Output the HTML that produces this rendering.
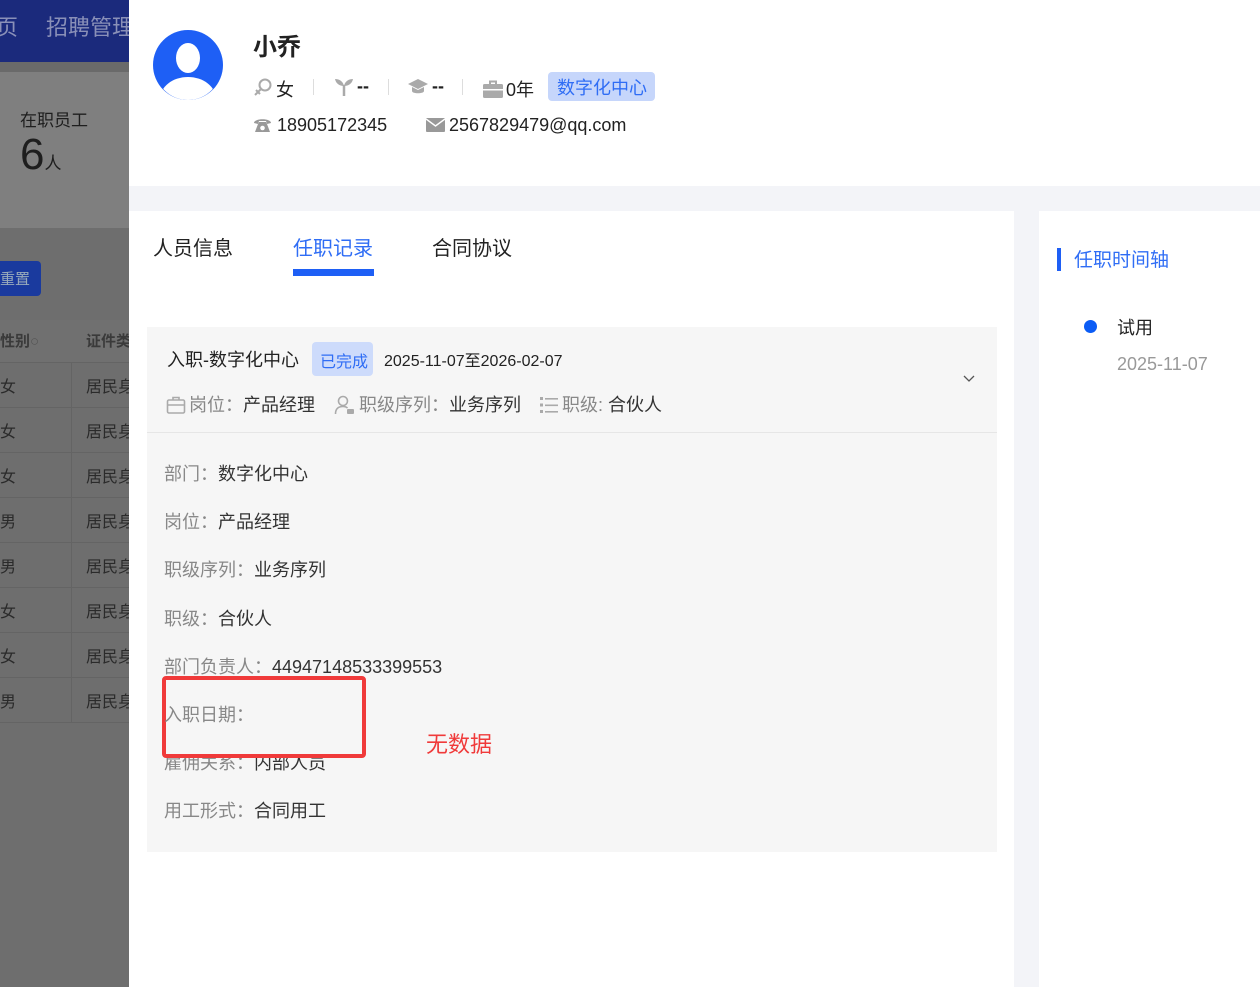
<!DOCTYPE html>
<html><head><meta charset="utf-8"><style>
*{margin:0;padding:0;box-sizing:border-box}
body{width:1260px;height:987px;position:relative;overflow:hidden;font-family:"Liberation Sans","Noto Sans CJK SC",sans-serif;background:#f3f4f8;color:#333}
.a{position:absolute;white-space:nowrap}
.bg{position:absolute;left:0;top:0;width:129px;height:987px;background:#6e6e6e;overflow:hidden}
.row{position:absolute;left:0;width:129px;height:45px;border-bottom:1px solid #646464;font-size:16px;color:#2a2a2a}
.lbl{color:#888}
.sep{position:absolute;top:79px;width:1px;height:16px;background:#ddd}
</style></head><body>
<div class="bg">
 <div class="a" style="left:0;top:0;width:129px;height:62px;background:#1b2a7c"></div>
 <div class="a" style="left:-4px;top:10px;font-size:22px;color:#8a90b8">页</div>
 <div class="a" style="left:46px;top:10px;font-size:22px;color:#8a90b8">招聘管理</div>
 <div class="a" style="left:0;top:62px;width:129px;height:10px;background:#6a6a6a"></div>
 <div class="a" style="left:0;top:72px;width:129px;height:156px;background:#7f7f7f"></div>
 <div class="a" style="left:20px;top:106px;font-size:17px;color:#1e1e1e">在职员工</div>
 <div class="a" style="left:20px;top:130px;font-size:44px;color:#1e1e1e">6<span style="font-size:17px">人</span></div>
 <div class="a" style="left:-6px;top:261px;width:47px;height:35px;background:#1a3a9e;border-radius:4px;color:#9ab;font-size:15px;padding:7px 0 0 6px">重置</div>
 <div class="a" style="left:0;top:320px;width:129px;height:43px;background:#707070;border-bottom:1px solid #646464"></div>
 <div class="a" style="left:0;top:330px;font-size:15px;color:#3a3a3a;font-weight:bold">性别<span style="font-weight:normal;color:#555">○</span></div>
 <div class="a" style="left:86px;top:330px;font-size:15px;color:#3a3a3a;font-weight:bold">证件类</div>
 <div class="a" style="left:71px;top:363px;width:1px;height:360px;background:#646464"></div>
 <div class="row" style="top:363px"><span class="a" style="left:0;top:10px">女</span><span class="a" style="left:86px;top:10px">居民身</span></div>
 <div class="row" style="top:408px"><span class="a" style="left:0;top:10px">女</span><span class="a" style="left:86px;top:10px">居民身</span></div>
 <div class="row" style="top:453px"><span class="a" style="left:0;top:10px">女</span><span class="a" style="left:86px;top:10px">居民身</span></div>
 <div class="row" style="top:498px"><span class="a" style="left:0;top:10px">男</span><span class="a" style="left:86px;top:10px">居民身</span></div>
 <div class="row" style="top:543px"><span class="a" style="left:0;top:10px">男</span><span class="a" style="left:86px;top:10px">居民身</span></div>
 <div class="row" style="top:588px"><span class="a" style="left:0;top:10px">女</span><span class="a" style="left:86px;top:10px">居民身</span></div>
 <div class="row" style="top:633px"><span class="a" style="left:0;top:10px">女</span><span class="a" style="left:86px;top:10px">居民身</span></div>
 <div class="row" style="top:678px"><span class="a" style="left:0;top:10px">男</span><span class="a" style="left:86px;top:10px">居民身</span></div>
</div>

<div class="a" style="left:129px;top:0;width:1131px;height:186px;background:#fff"></div>
<svg class="a" style="left:152px;top:29px" width="72" height="72" viewBox="0 0 72 72"><defs><clipPath id="c"><ellipse cx="36" cy="36" rx="34" ry="35"/></clipPath></defs><ellipse cx="36" cy="36" rx="35" ry="35" fill="#1e5ff5"/><g clip-path="url(#c)"><ellipse cx="36" cy="29" rx="12" ry="15" fill="#fff"/><ellipse cx="36" cy="70" rx="28" ry="22" fill="#fff"/></g></svg>
<div class="a" style="left:253px;top:27px;font-size:24px;font-weight:bold;color:#222">小乔</div>

<svg class="a" style="left:253px;top:78px" width="20" height="20" viewBox="0 0 20 20"><circle cx="12" cy="7" r="5.5" fill="none" stroke="#aaa" stroke-width="2"/><path d="M8 11 L2 17 M3 12 L7 16" stroke="#aaa" stroke-width="2"/></svg>
<div class="a" style="left:276px;top:76px;font-size:18px;color:#222">女</div>
<div class="sep" style="left:313px"></div>
<svg class="a" style="left:334px;top:77px" width="20" height="20" viewBox="0 0 20 20"><path d="M10 8 L10 19" stroke="#aaa" stroke-width="2.5"/><path d="M10 9 C6 9 2 7 1 2 C5 2 9 4 10 9Z M10 9 C14 9 18 7 19 2 C15 2 11 4 10 9Z" fill="#aaa"/></svg>
<div class="a" style="left:357px;top:76px;font-size:18px;color:#222;font-weight:bold">--</div>
<div class="sep" style="left:388px"></div>
<svg class="a" style="left:407px;top:78px" width="22" height="18" viewBox="0 0 22 18"><path d="M11 1 L21 6 L11 11 L1 6Z" fill="#aaa"/><path d="M5 9 L5 13 C5 16 17 16 17 13 L17 9 L11 12Z" fill="#aaa"/></svg>
<div class="a" style="left:432px;top:76px;font-size:18px;color:#222;font-weight:bold">--</div>
<div class="sep" style="left:462px"></div>
<svg class="a" style="left:483px;top:80px" width="20" height="18" viewBox="0 0 20 18"><path d="M7 4 V1.5 H13 V4" fill="none" stroke="#aaa" stroke-width="2"/><rect x="0" y="4" width="20" height="14" rx="1.5" fill="#aaa"/><rect x="0" y="9" width="20" height="1.5" fill="#fff"/></svg>
<div class="a" style="left:506px;top:76px;font-size:18px;color:#222">0年</div>
<div class="a" style="left:548px;top:72px;width:107px;height:29px;background:#c6d6fb;border-radius:4px;color:#2f6df5;font-size:18px;padding:2px 0 0 9px">数字化中心</div>

<svg class="a" style="left:253px;top:117px" width="19" height="17" viewBox="0 0 19 17"><path d="M1 6 C1 1 18 1 18 6 L14 7 L13 4 L6 4 L5 7Z" fill="#999"/><path d="M5 7 L6 5 L13 5 L14 7 L17 15 L2 15Z" fill="#999"/><circle cx="9.5" cy="11" r="2.3" fill="#fff"/></svg>
<div class="a" style="left:277px;top:115px;font-size:18px;color:#222">18905172345</div>
<svg class="a" style="left:426px;top:118px" width="19" height="14" viewBox="0 0 19 14"><rect width="19" height="14" rx="1" fill="#999"/><path d="M0 1 L9.5 8 L19 1" fill="none" stroke="#fff" stroke-width="1.5"/></svg>
<div class="a" style="left:449px;top:115px;font-size:18px;color:#222">2567829479@qq.com</div>

<div class="a" style="left:129px;top:211px;width:885px;height:776px;background:#fff"></div>
<div class="a" style="left:1039px;top:211px;width:221px;height:776px;background:#fff"></div>
<div class="a" style="left:153px;top:232px;font-size:20px;color:#222">人员信息</div>
<div class="a" style="left:293px;top:232px;font-size:20px;color:#2f6df5">任职记录</div>
<div class="a" style="left:293px;top:269px;width:81px;height:7px;background:#1e5ff5"></div>
<div class="a" style="left:432px;top:232px;font-size:20px;color:#222">合同协议</div>

<div class="a" style="left:147px;top:327px;width:850px;height:525px;background:#f6f6f6"></div>
<div class="a" style="left:147px;top:432px;width:850px;height:1px;background:#e6e6e6"></div>
<div class="a" style="left:167px;top:346px;font-size:18px;color:#222">入职-数字化中心</div>
<div class="a" style="left:312px;top:342px;width:61px;height:34px;background:#cddbfb;border-radius:4px;color:#2f6df5;font-size:16px;padding:6px 0 0 8px">已完成</div>
<div class="a" style="left:384px;top:347px;font-size:16px;color:#222">2025-11-07至2026-02-07</div>
<svg class="a" style="left:963px;top:375px" width="12" height="8" viewBox="0 0 12 8"><path d="M1 1 L6 6 L11 1" fill="none" stroke="#555" stroke-width="1.3"/></svg>

<svg class="a" style="left:166px;top:395px" width="20" height="20" viewBox="0 0 20 20"><path d="M7 5 V2.5 H13 V5" fill="none" stroke="#aaa" stroke-width="1.6"/><rect x="1.5" y="5" width="17" height="13" rx="1.5" fill="none" stroke="#aaa" stroke-width="1.6"/><path d="M1.5 10 H18.5" stroke="#aaa" stroke-width="1.6"/></svg>
<div class="a" style="left:189px;top:391px;font-size:18px"><span class="lbl">岗位：</span>产品经理</div>
<svg class="a" style="left:334px;top:394px" width="22" height="22" viewBox="0 0 22 22"><circle cx="9" cy="7" r="4.5" fill="none" stroke="#aaa" stroke-width="1.6"/><path d="M1.5 20 C1.5 14 5 12.5 9 12.5 C11 12.5 12.5 13 13.5 14" fill="none" stroke="#aaa" stroke-width="1.6"/><rect x="13" y="15" width="7" height="5" rx="1" fill="#aaa"/></svg>
<div class="a" style="left:359px;top:391px;font-size:18px"><span class="lbl">职级序列：</span>业务序列</div>
<svg class="a" style="left:539px;top:395px" width="20" height="20" viewBox="0 0 20 20"><g fill="#aaa"><rect x="1" y="2" width="3" height="3"/><rect x="1" y="8.5" width="3" height="3"/><rect x="1" y="15" width="3" height="3"/><rect x="6" y="3" width="13" height="1.6"/><rect x="6" y="9.5" width="13" height="1.6"/><rect x="6" y="16" width="13" height="1.6"/></g></svg>
<div class="a" style="left:562px;top:391px;font-size:18px"><span class="lbl">职级: </span>合伙人</div>

<div class="a" style="left:164px;top:460px;font-size:18px"><span class="lbl">部门：</span>数字化中心</div>
<div class="a" style="left:164px;top:508px;font-size:18px"><span class="lbl">岗位：</span>产品经理</div>
<div class="a" style="left:164px;top:556px;font-size:18px"><span class="lbl">职级序列：</span>业务序列</div>
<div class="a" style="left:164px;top:605px;font-size:18px"><span class="lbl">职级：</span>合伙人</div>
<div class="a" style="left:164px;top:653px;font-size:18px"><span class="lbl">部门负责人：</span>44947148533399553</div>
<div class="a" style="left:164px;top:749px;font-size:18px"><span class="lbl">雇佣关系：</span>内部人员</div>
<div class="a" style="left:164px;top:797px;font-size:18px"><span class="lbl">用工形式：</span>合同用工</div>
<div class="a" style="left:162px;top:676px;width:204px;height:82px;border:4px solid #f03a3a;border-radius:4px;background:#f6f6f6"></div>
<div class="a" style="left:164px;top:701px;font-size:18px"><span class="lbl">入职日期：</span></div>
<div class="a" style="left:426px;top:727px;font-size:22px;color:#f03a3a">无数据</div>

<div class="a" style="left:1057px;top:248px;width:4px;height:23px;background:#1e5ff5"></div>
<div class="a" style="left:1074px;top:245px;font-size:19px;color:#2f6df5">任职时间轴</div>
<div class="a" style="left:1084px;top:320px;width:13px;height:13px;border-radius:50%;background:#0b5cf5"></div>
<div class="a" style="left:1117px;top:314px;font-size:18px;color:#222">试用</div>
<div class="a" style="left:1117px;top:354px;font-size:18px;color:#999">2025-11-07</div>
</body></html>
